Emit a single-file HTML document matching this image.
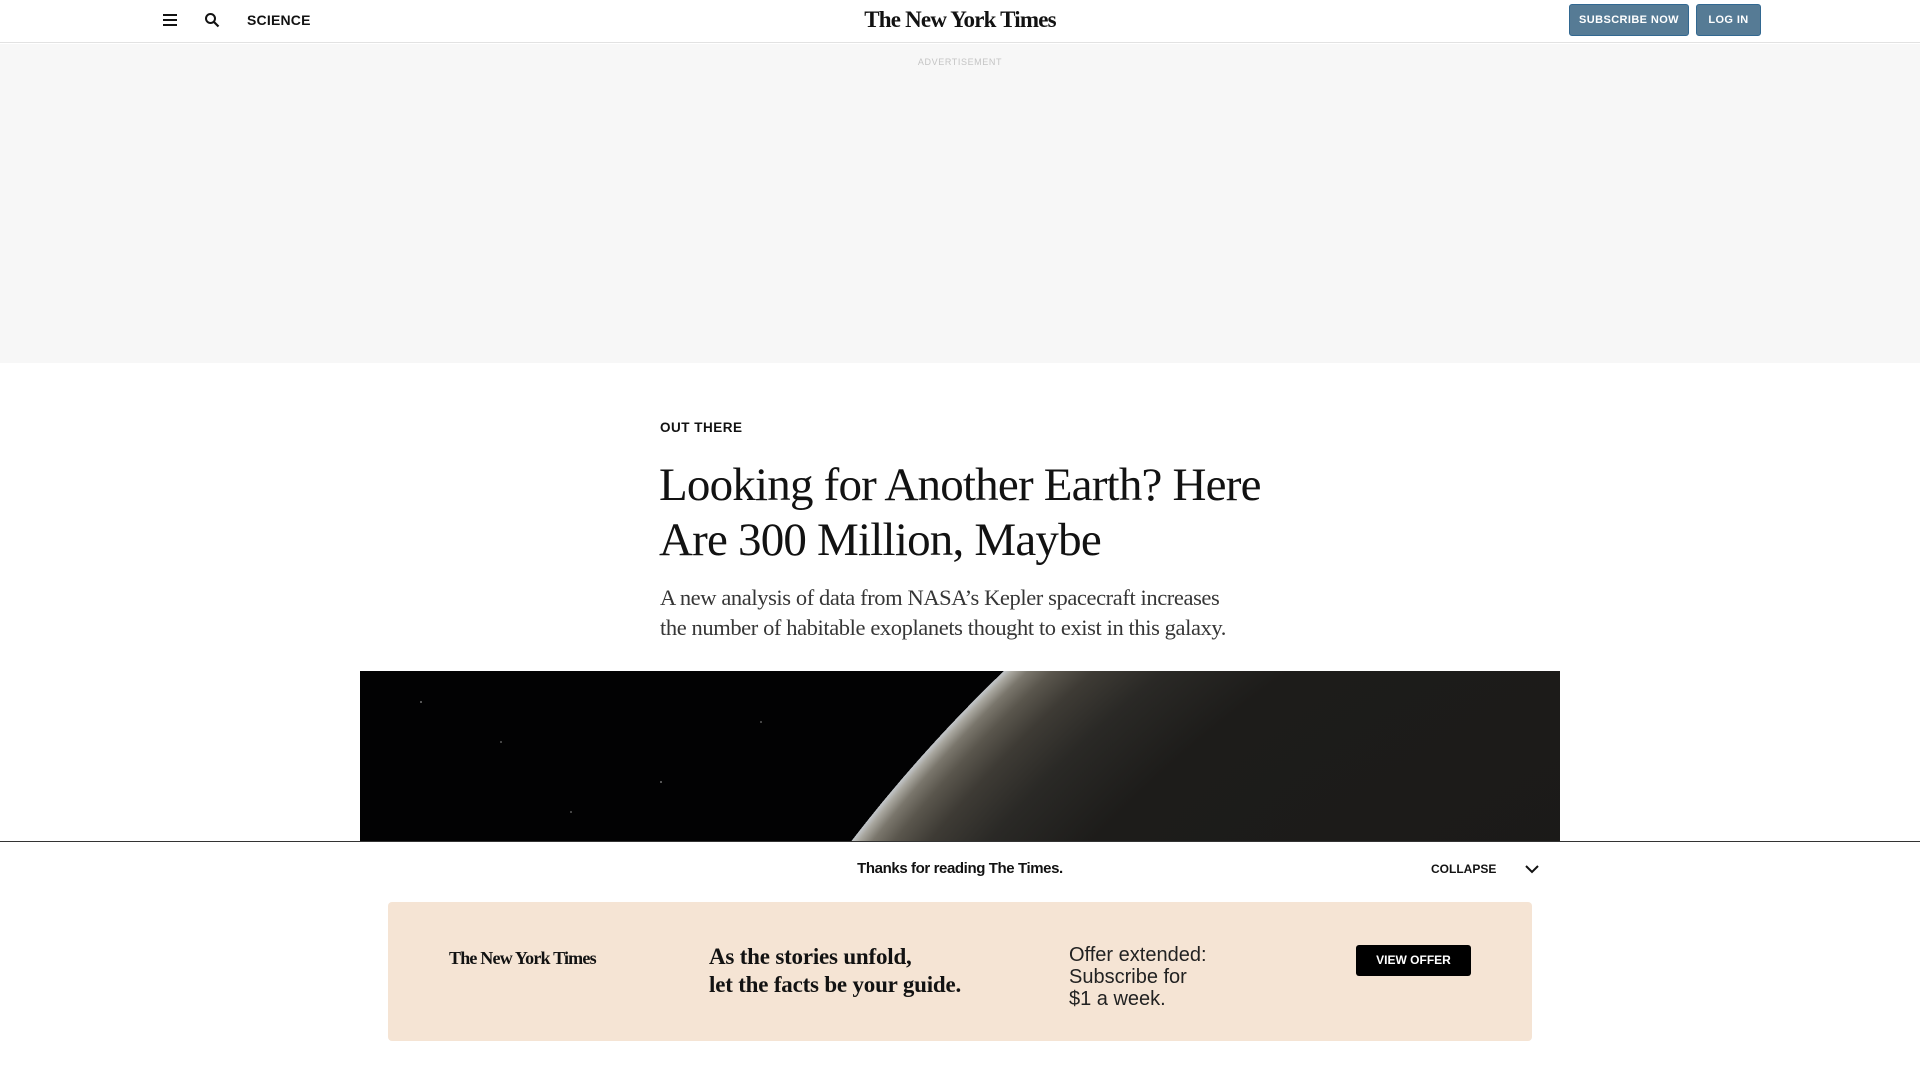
<!DOCTYPE html>
<html style="overflow:hidden"><head><meta charset="utf-8">
<style>
*{margin:0;padding:0;box-sizing:border-box}
body{width:1920px;height:1080px;overflow:hidden;background:#fff;position:relative;font-family:"Liberation Sans",sans-serif;color:#121212}
.abs{position:absolute}
.serif{font-family:"Liberation Serif",serif}
.logo{font-family:"Liberation Serif",serif;font-weight:bold;letter-spacing:-0.8px;white-space:nowrap}
</style></head><body>
<div class="abs" style="left:0;top:0;width:1920px;height:43px;border-bottom:1px solid #e2e2e2;background:#fff"></div>
<svg class="abs" style="left:162px;top:13px" width="16" height="14" viewBox="0 0 16 14"><rect x="1" y="1" width="14" height="2" fill="#121212"/><rect x="1" y="6" width="14" height="2" fill="#121212"/><rect x="1" y="11" width="14" height="2" fill="#121212"/></svg>
<svg class="abs" style="left:204px;top:12px" width="16" height="16" viewBox="0 0 16 16"><circle cx="6.5" cy="6.5" r="4.5" stroke="#121212" stroke-width="2" fill="none"/><line x1="10" y1="10" x2="14.5" y2="14.5" stroke="#121212" stroke-width="2.2"/></svg>
<div class="abs" style="left:247px;top:12px;font-size:14px;font-weight:bold;letter-spacing:0.2px">SCIENCE</div>
<div class="abs logo" style="left:860px;top:7px;width:200px;text-align:center;font-size:23px">The New York Times</div>
<div class="abs" style="left:1569px;top:4px;width:120px;height:32px;background:#567b95;border:1px solid #326891;border-radius:3px;color:#fff;font-size:11px;font-weight:bold;text-align:center;line-height:30px;letter-spacing:0.4px">SUBSCRIBE NOW</div>
<div class="abs" style="left:1696px;top:4px;width:65px;height:32px;background:#567b95;border:1px solid #326891;border-radius:3px;color:#fff;font-size:11px;font-weight:bold;text-align:center;line-height:30px;letter-spacing:0.4px">LOG IN</div>
<div class="abs" style="left:0;top:44px;width:1920px;height:319px;background:#f7f7f7"></div>
<div class="abs" style="left:0;top:57px;width:1920px;text-align:center;font-size:9px;color:#c4c4c4;letter-spacing:0.6px">ADVERTISEMENT</div>
<div class="abs" style="left:660px;top:420px;font-size:13.5px;font-weight:bold;letter-spacing:0.5px">OUT THERE</div>
<div class="abs serif" style="left:659px;top:458px;width:640px;font-size:47px;line-height:55px;letter-spacing:-0.8px;color:#121212">Looking for Another Earth? Here Are 300 Million, Maybe</div>
<div class="abs serif" style="left:660px;top:583px;width:585px;font-size:22.5px;line-height:30px;color:#363636;letter-spacing:-0.4px">A new analysis of data from NASA’s Kepler spacecraft increases the number of habitable exoplanets thought to exist in this galaxy.</div>
<div class="abs" style="left:360px;top:671px;width:1200px;height:170px;background:#020203;overflow:hidden">
  <div class="abs" style="left:175px;top:-425px;width:3050px;height:3050px;border-radius:50%;background:radial-gradient(circle closest-side, #141413 0%, #1d1c1a 88%, #2a2926 93%, #3e3b35 96%, #5a564d 97.8%, #7a766c 98.9%, #a8a69e 99.6%, #c4c8cc 100%, rgba(0,0,0,0) 100%)"></div>
  <div class="abs" style="left:60px;top:30px;width:2px;height:2px;background:#555"></div>
  <div class="abs" style="left:140px;top:70px;width:2px;height:2px;background:#444"></div>
  <div class="abs" style="left:300px;top:110px;width:2px;height:2px;background:#555"></div>
  <div class="abs" style="left:210px;top:140px;width:2px;height:2px;background:#444"></div>
  <div class="abs" style="left:400px;top:50px;width:2px;height:2px;background:#444"></div>
</div>
<div class="abs" style="left:0;top:841px;width:1920px;height:239px;background:#fff;border-top:1px solid #333"></div>
<div class="abs" style="left:0;top:860px;width:1920px;text-align:center;font-size:15px;font-weight:bold;letter-spacing:-0.4px">Thanks for reading The Times.</div>
<div class="abs" style="left:1431px;top:862px;font-size:12px;font-weight:bold;letter-spacing:0">COLLAPSE</div>
<svg class="abs" style="left:1524px;top:863px" width="16" height="12" viewBox="0 0 16 12"><polyline points="2,3 8,9 14,3" fill="none" stroke="#121212" stroke-width="2"/></svg>
<div class="abs" style="left:388px;top:902px;width:1144px;height:139px;background:#f5e4d4;border-radius:4px"></div>
<div class="abs logo" style="left:449px;top:948px;font-size:18px">The New York Times</div>
<div class="abs serif" style="left:709px;top:943px;font-size:23px;line-height:28px;font-weight:bold;letter-spacing:-0.2px">As the stories unfold,<br>let the facts be your guide.</div>
<div class="abs" style="left:1069px;top:944px;font-size:20px;line-height:22px;color:#222">Offer extended:<br>Subscribe for<br>$1 a week.</div>
<div class="abs" style="left:1356px;top:945px;width:115px;height:31px;background:#000;border-radius:3px;color:#fff;font-size:12px;font-weight:bold;text-align:center;line-height:31px">VIEW OFFER</div>
</body></html>
